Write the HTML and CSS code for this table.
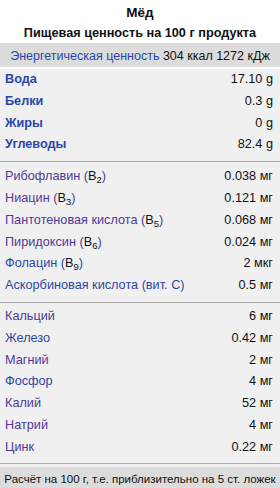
FILE: index.html
```html
<!DOCTYPE html>
<html lang="ru">
<head>
<meta charset="utf-8">
<link rel="stylesheet" href="styles.css">
</head>
<body>
<div class="box">
  <div class="title">Мёд</div>
  <div class="subtitle">Пищевая ценность на 100 г продукта</div>
  <div class="energy"><span class="link">Энергетическая ценность</span> 304 ккал 1272 кДж</div>
  <div class="body">
    <div class="section main">
      <div class="row"><span class="link b">Вода</span><span>17.10 g</span></div>
      <div class="row"><span class="link b">Белки</span><span>0.3 g</span></div>
      <div class="row"><span class="link b">Жиры</span><span>0 g</span></div>
      <div class="row"><span class="link b">Углеводы</span><span>82.4 g</span></div>
    </div>
    <div class="section vit">
      <div class="row"><span><span class="visited">Рибофлавин (</span>B<sub>2</sub><span class="visited">)</span></span><span>0.038 мг</span></div>
      <div class="row"><span><span class="visited">Ниацин (</span>B<sub>3</sub><span class="visited">)</span></span><span>0.121 мг</span></div>
      <div class="row"><span><span class="visited">Пантотеновая кислота (</span>B<sub>5</sub><span class="visited">)</span></span><span>0.068 мг</span></div>
      <div class="row"><span><span class="visited">Пиридоксин (</span>B<sub>6</sub><span class="visited">)</span></span><span>0.024 мг</span></div>
      <div class="row"><span><span class="link">Фолацин (</span>B<sub>9</sub><span class="link">)</span></span><span>2 мкг</span></div>
      <div class="row"><span class="link">Аскорбиновая кислота (вит. C)</span><span>0.5 мг</span></div>
    </div>
    <div class="section min">
      <div class="row"><span class="visited">Кальций</span><span>6 мг</span></div>
      <div class="row"><span class="link">Железо</span><span>0.42 мг</span></div>
      <div class="row"><span class="visited">Магний</span><span>2 мг</span></div>
      <div class="row"><span class="link">Фосфор</span><span>4 мг</span></div>
      <div class="row"><span class="visited">Калий</span><span>52 мг</span></div>
      <div class="row"><span class="visited">Натрий</span><span>4 мг</span></div>
      <div class="row"><span class="visited">Цинк</span><span>0.22 мг</span></div>
    </div>
    <div class="footer">Расчёт на 100 г, т.е. приблизительно на 5 ст. ложек</div>
  </div>
</div>
</body>
</html>
```
FILE: styles.css
```css
html, body {
  margin: 0;
  padding: 0;
  background: #fff;
}
.box {
  width: 280px;
  height: 488px;
  overflow: hidden;
  font-family: "Liberation Sans", Arial, sans-serif;
  font-size: 12.7px;
  color: #111;
}
.title {
  font-weight: bold;
  font-size: 13.5px;
  text-align: center;
  padding-top: 3px;
  height: 20px;
  line-height: 20px;
}
.subtitle {
  font-weight: bold;
  text-align: center;
  height: 20px;
  line-height: 20px;
}
.energy {
  background: #dcdcdc;
  text-align: center;
  font-size: 12.5px;
  padding-top: 2px;
  height: 22px;
  line-height: 22px;
  white-space: nowrap;
}
.body {
  margin-top: 2px;
  background: #f0f0f0;
}
.link { color: #2a47a8; }
.visited { color: #50389a; }
.b { font-weight: bold; }
.section {
  border-bottom: 1px solid #aaa;
  padding-left: 5px;
  padding-right: 7px;
}
.section.main {
  padding-top: 0;
  padding-bottom: 5px;
}
.section.vit {
  padding-top: 4px;
  padding-bottom: 5px;
}
.section.min {
  padding-top: 3px;
  padding-bottom: 4px;
}
.row {
  display: flex;
  justify-content: space-between;
  height: 21.8px;
  line-height: 21.8px;
  white-space: nowrap;
}
sub {
  font-size: 9.5px;
  line-height: 0;
  vertical-align: -3px;
}
.footer {
  margin-top: 3px;
  background: #dcdcdc;
  font-size: 11.5px;
  padding-top: 4px;
  height: 17px;
  line-height: 17px;
  text-align: center;
  white-space: nowrap;
}
```
